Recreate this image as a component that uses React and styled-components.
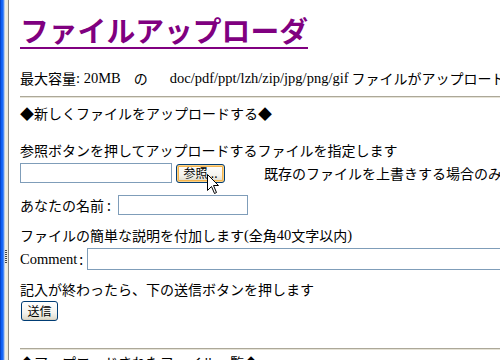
import React from 'react';
import styled, { createGlobalStyle } from 'styled-components';

const GlobalStyle = createGlobalStyle`
  html, body {
    margin: 0;
    padding: 0;
    background: #ffffff;
    overflow: hidden;
  }
  body {
    font-family: "Liberation Serif", "Noto Sans CJK JP", serif;
    font-size: 14px;
    color: #000;
  }
`;

const Window = styled.div`
  position: relative;
  display: flex;
  width: 500px;
  height: 360px;
  overflow: hidden;
`;

const Frame = styled.div`
  position: relative;
  flex: 0 0 9px;
  background: linear-gradient(
    to right,
    #0030a8 0px,
    #0a5cf0 1px,
    #1c6cf8 3px,
    #7aa8f0 4px,
    #f3f1e6 5px,
    #ece9d8 8px,
    #8c8a80 8px,
    #8c8a80 9px
  );
`;

const Grip = styled.div`
  position: absolute;
  left: 5px;
  top: 250px;
  width: 2px;
  height: 14px;
  background: repeating-linear-gradient(
    to bottom,
    #444 0px,
    #444 1px,
    transparent 1px,
    transparent 2px
  );
`;

const Content = styled.div`
  flex: 1;
  padding-left: 11px;
  display: flex;
  flex-direction: column;
  min-width: 0;
`;

const Title = styled.h1`
  margin: 12px 0 0 0;
  font-family: "Noto Sans CJK JP", sans-serif;
  font-size: 28.8px;
  font-weight: 700;
  line-height: 36px;
  color: #800080;
  text-decoration: underline;
  text-decoration-thickness: 2px;
  text-underline-offset: 5px;
  white-space: nowrap;
`;

const Line = styled.div`
  margin-top: ${(p) => p.$top || 0}px;
  height: 20px;
  line-height: 20px;
  white-space: nowrap;
  display: flex;
  align-items: center;
  flex: none;
`;

const Jp = styled.span`
  font-family: "Noto Sans CJK JP", sans-serif;
  font-size: 14px;
  margin-left: ${(p) => p.$left || 0}px;
  margin-right: ${(p) => p.$right || 0}px;
`;

const Serif = styled.span`
  font-family: "Liberation Serif", serif;
  font-size: 14.5px;
  margin-left: ${(p) => p.$left || 0}px;
  margin-right: ${(p) => p.$right || 0}px;
`;

const Rule = styled.hr`
  margin: ${(p) => p.$top}px 0 0 0;
  height: 0;
  border: none;
  border-top: 1px solid #aca899;
  border-bottom: 1px solid #e6e3d6;
  flex: none;
`;

const Row = styled.div`
  margin-top: ${(p) => p.$top || 0}px;
  display: flex;
  align-items: center;
  white-space: nowrap;
  flex: none;
`;

const TextBox = styled.input`
  box-sizing: border-box;
  width: ${(p) => p.$w}px;
  height: ${(p) => p.$h || 20}px;
  margin: 0;
  padding: 0 2px;
  border: 1px solid #7f9db9;
  background: #fff;
  outline: none;
  flex: none;
`;

const Button = styled.button`
  box-sizing: border-box;
  width: ${(p) => p.$w}px;
  height: ${(p) => p.$h || 20}px;
  margin: 0 0 0 ${(p) => p.$left || 0}px;
  padding: 0;
  border: 1px solid #003c74;
  border-radius: 3px;
  background: linear-gradient(to bottom, #ffffff 0%, #f4f3ee 60%, #dcd8c8 100%);
  box-shadow: ${(p) =>
    p.$hot
      ? 'inset 0 0 0 1px #fad28a, inset 0 0 0 2px #f2b44e'
      : 'inset 0 -1px 0 #d6d0c0'};
  font-family: "Noto Sans CJK JP", sans-serif;
  font-size: 12px;
  line-height: 16px;
  color: #000;
  flex: none;
`;

const Cursor = styled.svg`
  position: absolute;
  left: 207px;
  top: 174px;
`;

export default function App() {
  return (
    <>
      <GlobalStyle />
      <Window>
        <Frame>
          <Grip />
        </Frame>
        <Content>
          <Title>ファイルアップローダ</Title>
          <Line $top={20}>
            <Jp>最大容量</Jp>
            <Serif>: 20MB</Serif>
            <Jp $left={13}>の</Jp>
            <Serif $left={22}>doc/pdf/ppt/lzh/zip/jpg/png/gif</Serif>
            <Jp $left={3}>ファイルがアップロードできます</Jp>
          </Line>
          <Rule $top={8} />
          <Line $top={5}>
            <Jp>◆新しくファイルをアップロードする◆</Jp>
          </Line>
          <Line $top={17}>
            <Jp>参照ボタンを押してアップロードするファイルを指定します</Jp>
          </Line>
          <Row $top={3}>
            <TextBox $w={152} />
            <Button $w={49} $h={19} $left={4} $hot>
              参照...
            </Button>
            <Jp $left={39}>既存のファイルを上書きする場合のみ</Jp>
          </Row>
          <Row $top={12}>
            <Jp>あなたの名前</Jp>
            <Jp $left={3} $right={7}>:</Jp>
            <TextBox $w={130} />
          </Row>
          <Line $top={10}>
            <Jp>ファイルの簡単な説明を付加します</Jp>
            <Serif>(</Serif>
            <Jp>全角</Jp>
            <Serif>40</Serif>
            <Jp>文字以内</Jp>
            <Serif>)</Serif>
          </Line>
          <Row $top={3}>
            <Serif>Comment</Serif>
            <Jp $left={2} $right={4}>:</Jp>
            <TextBox $w={440} $h={22} />
          </Row>
          <Line $top={9}>
            <Jp>記入が終わったら、下の送信ボタンを押します</Jp>
          </Line>
          <Row $top={2}>
            <Button $w={37} $h={20} $left={1}>
              送信
            </Button>
          </Row>
          <Rule $top={27} />
          <Line $top={2}>
            <Jp>◆アップロードされたファイル一覧◆</Jp>
          </Line>
        </Content>
        <Cursor width="14" height="22" viewBox="0 0 14 22">
          <polygon
            points="0.5,0.5 0.5,16.5 4.5,12.5 7.5,19.5 9.5,18.5 6.5,11.5 11.5,11.5"
            fill="#fff"
            stroke="#000"
            strokeWidth="1"
          />
        </Cursor>
      </Window>
    </>
  );
}
